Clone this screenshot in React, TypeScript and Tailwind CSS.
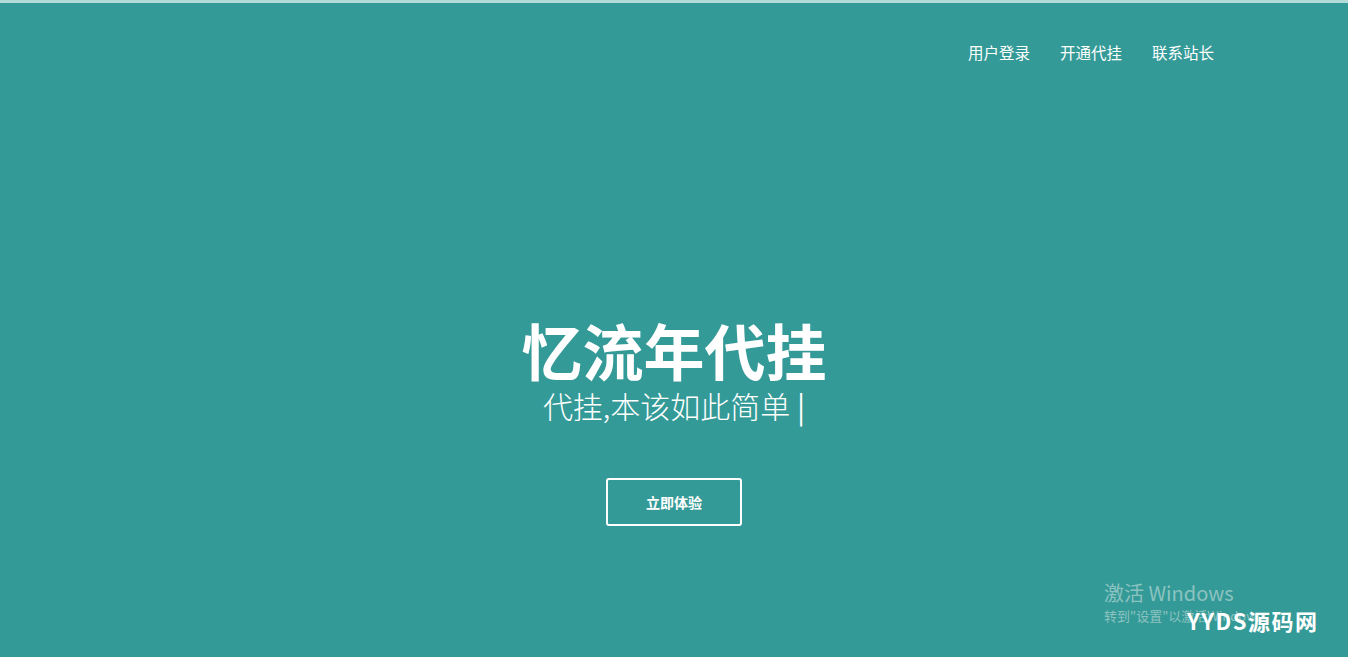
import * as React from "react";

const font = { fontFamily: '"Microsoft YaHei", "Noto Sans CJK SC", "Noto Sans", sans-serif' };

export default function App() {
  return (
    <div className="relative flex h-[657px] w-full flex-col overflow-hidden bg-[#349a97]" style={font}>
      <div className="h-[3px] w-full bg-[#b5dbd9]" />
      <nav className="flex justify-end gap-[30px] pr-[134px] pt-[38px] text-[15.5px] text-white">
        <a className="leading-[22px]">用户登录</a>
        <a className="leading-[22px]">开通代挂</a>
        <a className="leading-[22px]">联系站长</a>
      </nav>
      <main className="flex flex-col items-center pt-[257px]">
        <h1 className="text-[61px] font-bold leading-[60px] text-white">忆流年代挂</h1>
        <p className="mt-[8px] text-[30px] font-light leading-[34px] text-white">
          代挂,本该如此简单 <span className="font-normal">|</span>
        </p>
        <button className="mt-[56px] h-[48px] w-[136px] rounded-[3px] border-2 border-white text-[14px] font-bold text-white">
          立即体验
        </button>
      </main>
      <div className="absolute left-[1104px] top-[580px] text-[#8cc3c1]">
        <div className="text-[20px] leading-[26px]">激活 Windows</div>
        <div className="text-[13px] leading-[20px]">转到"设置"以激活Windows。</div>
      </div>
      <div className="absolute left-[1187px] top-[605px] text-[22px] font-bold leading-[30px] tracking-[1.5px] text-white">
        YYDS源码网
      </div>
    </div>
  );
}
